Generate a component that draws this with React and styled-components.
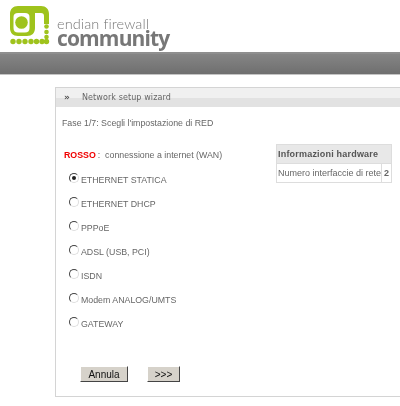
import React from "react";
import styled, { createGlobalStyle } from "styled-components";

const Global = createGlobalStyle`
  html, body { margin: 0; padding: 0; background: #fff; overflow: hidden; }
  body { font-family: "Liberation Sans", Arial, sans-serif; color: #555; }
`;
const Page = styled.div`
  width: 400px; height: 406px; overflow: hidden; display: flex; flex-direction: column;
  filter: blur(0.35px);
`;
const Masthead = styled.header`
  height: 52px; display: flex; align-items: flex-start; padding: 6px 0 0 10px; box-sizing: border-box; gap: 7px; flex: none;
`;
const Wordmark = styled.div`
  display: flex; flex-direction: column; margin-top: 12px; color: #777;
`;
const Tagline = styled.span`
  font: 300 14.5px/12px Lato, "DejaVu Sans", sans-serif; letter-spacing: 0.1px; color: #777; white-space: nowrap;
`;
const Brand = styled.span`
  font: 700 21px/16px "Open Sans", "DejaVu Sans", sans-serif; letter-spacing: -0.85px; color: #777; white-space: nowrap;
`;
const NavBar = styled.div`
  height: 23px; box-sizing: border-box; flex: none;
  background: linear-gradient(#858585, #6f6f6f);
  border-top: 2px solid #8f8f8f; border-bottom: 1px solid #c4c4c4;
`;
const Panel = styled.section`
  margin: 12px 0 0 55px; width: 380px; height: 310px; box-sizing: border-box; flex: none;
  border: 1px solid #d4d4d4; border-right: 0; display: flex; flex-direction: column;
`;
const PanelTitle = styled.div`
  height: 19px; flex: none; display: flex; align-items: center; gap: 12px; padding-left: 8px;
  background: linear-gradient(#f0f0f0 0 55%, #e2e2e2 55% 100%);
  font: 8px/1 "DejaVu Sans", sans-serif; color: #666; letter-spacing: 0.1px;
`;
const Chevrons = styled.span`font-weight: 700; font-size: 9px; color: #555;`;
const Body = styled.div`
  flex: 1; display: flex; flex-direction: column; padding: 11px 0 0 6px; font-size: 8.8px; line-height: 11px; color: #666;
`;
const Step = styled.p`margin: 0;`;
const Main = styled.div`display: flex; margin-top: 21px; align-items: flex-start;`;
const Column = styled.div`width: 214px; flex: none; padding-left: 2px; box-sizing: border-box;`;
const Question = styled.div`display: flex; gap: 2px; margin-bottom: 2px;`;
const Red = styled.strong`color: #f00000; font-size: 8.8px;`;
const Option = styled.label`display: flex; align-items: flex-end; height: 24px; padding-left: 5px; gap: 2px;`;
const Radio = styled.span`
  width: 10px; height: 10px; border-radius: 50%; box-sizing: border-box; flex: none; margin-bottom: 4px;
  border: 1px solid #777; border-top-color: #444; border-left-color: #444; border-bottom-color: #ddd; border-right-color: #ddd;
  background: #fff; display: flex; align-items: center; justify-content: center;
`;
const Dot = styled.span`width: 4px; height: 4px; border-radius: 50%; background: #222;`;
const OptionText = styled.span`margin-bottom: 1px;`;
const Info = styled.table`
  border-collapse: collapse; margin-top: -6px; font-size: 9px; line-height: 11px; color: #666;
  th, td { border: 1px solid #ddd; padding: 0; height: 18px; text-align: left; }
`;
const Head = styled.th`background: #e8e8e8; font-weight: 700; letter-spacing: 0.2px; padding-left: 1px !important; color: #555;`;
const Cell = styled.td`width: ${p => p.$w ? `${p.$w}px` : "auto"}; font-weight: ${p => p.$b ? 700 : 400}; text-align: ${p => p.$b ? "center" : "left"} !important; padding-left: ${p => p.$b ? 0 : 1}px !important;`;
const Actions = styled.div`display: flex; gap: 19px; margin: 35px 0 0 18px;`;
const Btn = styled.button`
  width: ${p => p.$w}px; height: 16px; padding: 0; box-sizing: border-box; background: #d6d2ca;
  border: 1px solid; border-color: #fff #444 #444 #fff; color: #111;
  font: 10px "Liberation Sans", sans-serif;
`;
const options = ["ETHERNET STATICA","ETHERNET DHCP","PPPoE","ADSL (USB, PCI)","ISDN","Modem ANALOG/UMTS","GATEWAY"];

const Logo = () => (
  <svg width="40" height="40" viewBox="0 0 40 40" style={{flex:"none"}}>
    <path fillRule="evenodd" fill="#9fc31c" d="M8 0H31C36 0 39 3 39 8V18H34V10C34 8 33 7 31 7H25V22C25 27 22 30 17 30H8C3 30 0 27 0 22V8C0 3 3 0 8 0ZM8 7C5 7 3.5 8.5 3.5 11V22C3.5 25 5 26.5 8 26.5H15C18 26.5 19.5 25 19.5 22V11C19.5 8.5 18 7 15 7Z" />
    <circle cx="11.5" cy="16.5" r="6.3" fill="#9fc31c"/>
    {[20.5,26,31].map(y=><circle key={y} cx="36.5" cy={y} r="2.3" fill="#9fc31c"/>)}
    {[3,9,15,21,26.5,32,36.5].map(x=><circle key={x} cx={x} cy="35.5" r="2.7" fill="#9fc31c"/>)}
  </svg>
);

export default function App() {
  return (
    <Page>
      <Global />
      <Masthead>
        <Logo />
        <Wordmark>
          <Tagline>endian firewall</Tagline>
          <Brand>community</Brand>
        </Wordmark>
      </Masthead>
      <NavBar />
      <Panel>
        <PanelTitle><Chevrons>»</Chevrons>Network setup wizard</PanelTitle>
        <Body>
          <Step>Fase 1/7: Scegli l'impostazione di RED</Step>
          <Main>
            <Column>
              <Question><Red>ROSSO</Red><span>:&nbsp; connessione a internet (WAN)</span></Question>
              {options.map((o,i)=>(
                <Option key={o}><Radio>{i===0 && <Dot/>}</Radio><OptionText>{o}</OptionText></Option>
              ))}
            </Column>
            <Info>
              <tbody>
                <tr><Head colSpan={2}>Informazioni hardware</Head></tr>
                <tr><Cell>Numero interfaccie di rete</Cell><Cell $w={9} $b>2</Cell></tr>
              </tbody>
            </Info>
          </Main>
          <Actions>
            <Btn $w={48} type="button">Annula</Btn>
            <Btn $w={33} type="button">&gt;&gt;&gt;</Btn>
          </Actions>
        </Body>
      </Panel>
    </Page>
  );
}
